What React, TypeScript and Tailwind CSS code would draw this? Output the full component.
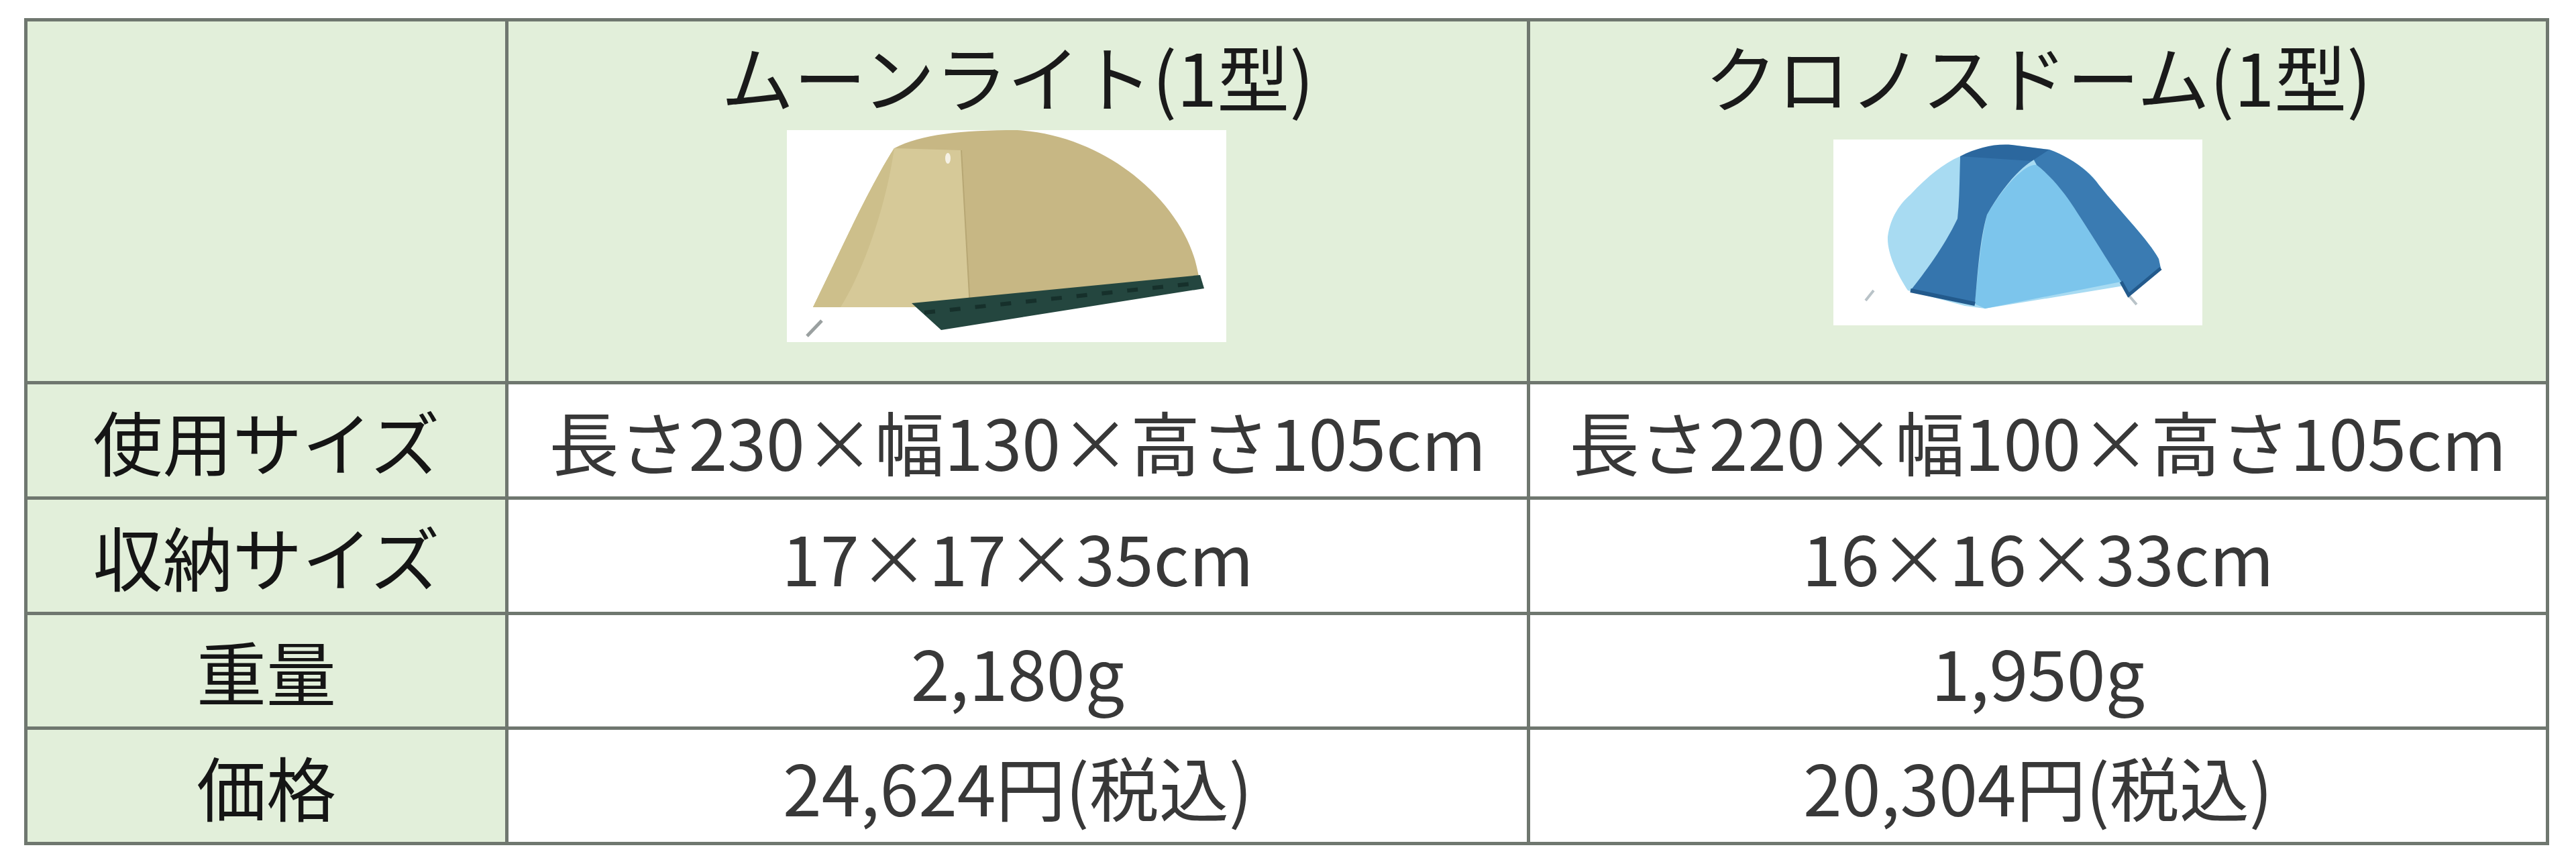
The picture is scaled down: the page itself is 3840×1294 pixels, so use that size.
import type { ReactNode } from "react";

// テントの比較表
const FONT = { fontFamily: '"Noto Sans CJK JP", "Noto Sans", sans-serif' };

const MoonlightTent = () => (
  <svg viewBox="0 0 655 316" className="w-[655px] h-[316px] bg-white">
    <path d="M52 284 L30 307" stroke="#9aa0a0" strokeWidth="5" />
    {/* 本体 */}
    <path
      d="M160 27 C200 6 260 0 343 0 C480 8 590 110 611 204 L616 227 L186 264 L39 264 C80 180 120 90 160 27 Z"
      fill="#c7b784"
    />
    {/* 前室パネル */}
    <path d="M160 27 L260 30 L273 264 L39 264 C80 180 120 90 160 27 Z" fill="#d6c998" />
    <path d="M160 27 C150 100 120 200 80 264 L39 264 C80 180 120 90 160 27 Z" fill="#cdbf8b" />
    <path d="M260 30 L273 264" stroke="#b7a774" strokeWidth="2" />
    <ellipse cx="240" cy="42" rx="4" ry="8" fill="#f5f1e4" />
    {/* 下部メッシュ */}
    <path d="M186 258 L616 216 L622 236 L230 298 Z" fill="#24463f" />
    <path d="M205 272 L612 228" stroke="#16302b" strokeWidth="6" strokeDasharray="16 22" />
  </svg>
);

const CronosTent = () => (
  <svg viewBox="0 0 550 277" className="w-[550px] h-[277px] bg-white">
    <path d="M60 225 L48 240 M440 232 L452 246" stroke="#b9c3c8" strokeWidth="4" />
    {/* インナー */}
    <path
      d="M111 225 C95 200 80 170 81 145 C85 115 100 95 115 82 C140 55 165 35 189 25 L266 8 L322 15 C360 30 385 50 396 68 C430 110 470 150 485 178 L488 192 L433 218 L226 252 L196 248 Z"
      fill="#a8dbf2"
    />
    <path d="M229 112 C260 60 290 35 303 38 C330 60 345 80 359 102 C390 150 415 190 429 212 L226 252 L211 245 C215 200 220 150 229 112 Z" fill="#7cc5ec" />
    {/* フライ */}
    <path d="M189 28 C188 60 188 90 185 118 C165 160 135 200 115 225 L211 245 C215 200 218 150 229 112 C250 75 275 45 296 32 L296 25 L189 25 Z" fill="#3575ad" />
    <path d="M296 25 L322 15 C350 25 380 45 396 68 C430 110 470 150 485 178 L488 192 L440 232 L429 212 C415 190 390 150 359 102 C345 80 325 55 303 38 Z" fill="#3a7bb2" />
    <path d="M189 25 C215 12 240 6 266 8 L322 15 L296 32 Z" fill="#2b679e" />
    <path d="M115 225 L211 245" stroke="#235a8c" strokeWidth="6" />
    <path d="M429 212 L440 232 L488 192" stroke="#235a8c" strokeWidth="5" fill="none" />
  </svg>
);

type Product = {
  name: string;
  art: ReactNode;
  artClass: string;
  use: string;
  pack: string;
  weight: string;
  price: string;
};

const products: Product[] = [
  {
    name: "ムーンライト(1型)",
    art: <MoonlightTent />,
    artClass: "mt-[18px] mr-[34px]",
    use: "長さ230×幅130×高さ105cm",
    pack: "17×17×35cm",
    weight: "2,180g",
    price: "24,624円(税込)",
  },
  {
    name: "クロノスドーム(1型)",
    art: <CronosTent />,
    artClass: "mt-[32px] mr-[60px]",
    use: "長さ220×幅100×高さ105cm",
    pack: "16×16×33cm",
    weight: "1,950g",
    price: "20,304円(税込)",
  },
];

const rows: { label: string; key: "use" | "pack" | "weight" | "price" }[] = [
  { label: "使用サイズ", key: "use" },
  { label: "収納サイズ", key: "pack" },
  { label: "重量", key: "weight" },
  { label: "価格", key: "price" },
];

export default function App() {
  return (
    <div className="w-[3840px] h-[1294px] bg-white pt-[27px] pl-[36px]" style={FONT}>
      <div className="w-[3764px] grid grid-cols-[712px_1518px_1514px] grid-rows-[536px_167px_167px_166px_167px] gap-[5px] p-[5px] bg-[#6f776f]">
        <div className="bg-[#e2efda]" />
        {products.map((p) => (
          <div key={p.name} className="bg-[#e2efda] flex flex-col items-center pt-[16px]">
            <div className="text-[108px] leading-[128px] text-[#1a1a1a]">{p.name}</div>
            <div className={p.artClass}>{p.art}</div>
          </div>
        ))}
        {rows.map((r) => (
          <>
            <div key={r.label} className="bg-[#e2efda] flex items-center justify-center text-[104px] text-[#151515]">
              {r.label}
            </div>
            {products.map((p) => (
              <div key={r.label + p.name} className="bg-white flex items-center justify-center text-[104px] text-[#383838]">
                {p[r.key]}
              </div>
            ))}
          </>
        ))}
      </div>
    </div>
  );
}
